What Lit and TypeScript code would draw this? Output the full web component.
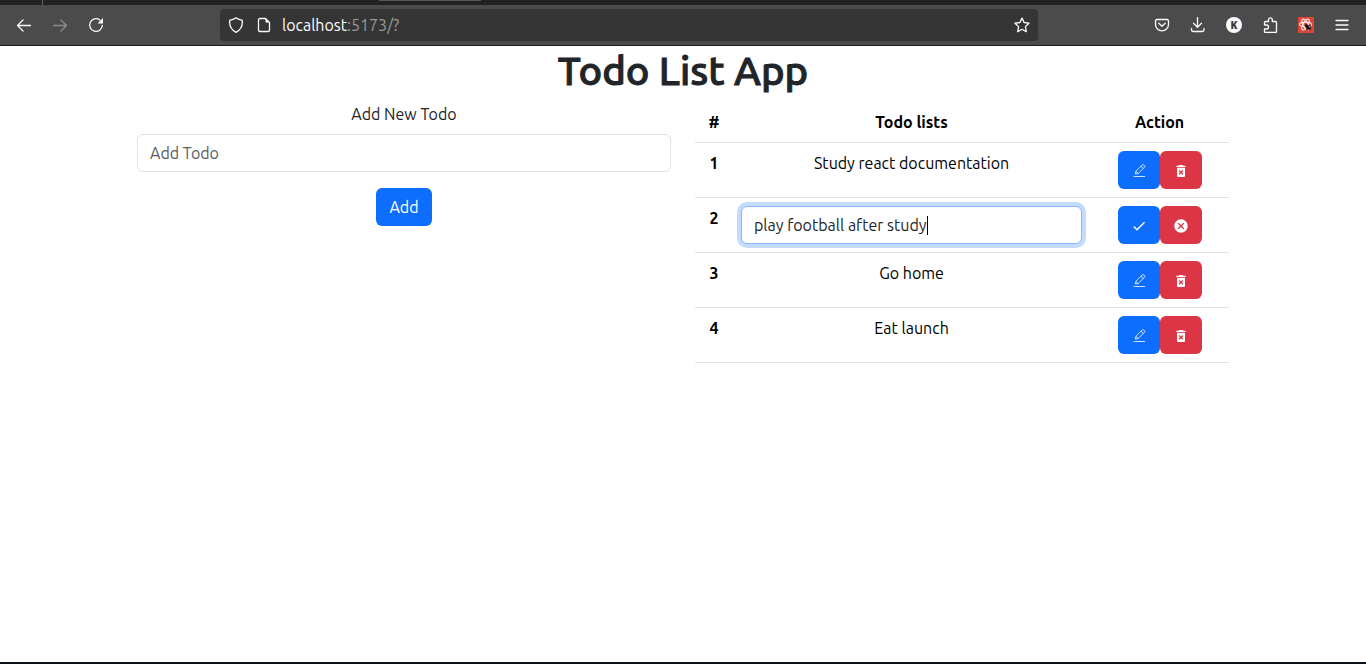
import { LitElement, html, svg, css } from "lit";
import { customElement, property, state, query } from "lit/decorators.js";

const line = (body: unknown) => html`<svg class="line" viewBox="0 0 16 16" width="16" height="16" aria-hidden="true">${body}</svg>`;
const solid = (d: string) => html`<svg class="solid" viewBox="0 0 24 24" width="16" height="16" aria-hidden="true"><path d=${d}></path></svg>`;

const icons = {
  back: line(svg`<path d="M14.500 8.500H1.500M7 3L1.500 8.500L7 14"/>`),
  forward: line(svg`<path d="M1.500 8.500H14.500M9 3L14.500 8.500L9 14"/>`),
  reload: line(svg`<path d="M14.300 8.500A6.300 6.300 0 1 1 11.800 3"/><path class="fill" d="M15 1V6.500H9.500Z"/>`),
  shield: line(svg`<path d="M8 0.800C9.800 2.200 12 2.900 14.200 3.100C14.900 8.300 12.600 13 8 15.300C3.400 13 1.100 8.300 1.800 3.100C4 2.900 6.200 2.200 8 0.800Z"/>`),
  page: line(svg`<path d="M3.800 1.500H9.500L13.500 5.500V13.200A1.300 1.300 0 0 1 12.200 14.500H3.800A1.300 1.300 0 0 1 2.500 13.200V2.800A1.300 1.300 0 0 1 3.800 1.500Z"/><path class="fill" d="M9.500 1.500V5.500H13.500Z"/>`),
  star: line(svg`<path d="M8 1.100L10.100 5.500L15 6.200L11.400 9.600L12.300 14.700L8 12.300L3.700 14.700L4.600 9.600L1 6.200L5.900 5.500Z"/>`),
  pocket: line(svg`<path d="M2.800 2.500H13.200A1.700 1.700 0 0 1 14.500 4.200V7.500A6.500 6.300 0 0 1 1.500 7.500V4.200A1.700 1.700 0 0 1 2.800 2.500Z"/><path d="M4.800 6.300L8 9.300L11.200 6.300"/>`),
  download: line(svg`<path d="M7.500 0.500V10M3.500 6.300L7.500 10.200L11.500 6.300M1.500 11.500V12.800A1.700 1.700 0 0 0 3.200 14.500H12.300A1.700 1.700 0 0 0 14 12.800V11.500"/>`),
  puzzle: line(svg`<path d="M2.500 8V5.500A1 1 0 0 1 3.500 4.500H6.500V2.800A1.900 1.900 0 0 1 10.300 2.800V4.500H13.500A1 1 0 0 1 14.500 5.500V14.500A1 1 0 0 1 13.500 15.500H3.500A1 1 0 0 1 2.500 14.500V12H4.500A2 2 0 0 0 4.500 8Z"/>`),
  menu: line(svg`<path d="M2 3.500H14M2 8H14M2 12.500H14"/>`),
  extension: html`<svg viewBox="0 0 16 16" width="16" height="16" aria-hidden="true">${svg`
    <rect width="16" height="16" fill="#dd4634"/>
    <g fill="none" stroke="#f6e4e1" stroke-width="1.100">
      <ellipse cx="7.500" cy="7.500" rx="6" ry="2.400"/>
      <ellipse cx="7.500" cy="7.500" rx="6" ry="2.400" transform="rotate(60 7.500 7.500)"/>
      <ellipse cx="7.500" cy="7.500" rx="6" ry="2.400" transform="rotate(120 7.500 7.500)"/>
    </g>
    <ellipse cx="9.500" cy="10" rx="1.500" ry="3.300" transform="rotate(-40 9.500 10)" fill="#1d1210"/>
    <path d="M7 10L13 8M8 12.500L13.500 11M9 7V13.500M12 8.500V13.500" stroke="#1d1210" stroke-width="0.800" fill="none"/>`}</svg>`,
  edit: html`<svg class="thin" viewBox="0 0 16 16" width="16" height="16" aria-hidden="true">${svg`
    <path d="M4.300 11L4.900 8.300L11.300 1.900A1 1 0 0 1 12.700 1.900L13.600 2.800A1 1 0 0 1 13.600 4.200L7.200 10.500ZM10 3.300L12.300 5.500M4.900 8.300L7.200 10.500"/>
    <path d="M2.500 13.500H14"/>`}</svg>`,
  remove: solid("M6 19c0 1.100.9 2 2 2h8c1.100 0 2-.9 2-2V7H6v12zm2.460-7.120 1.410-1.410L12 12.590l2.120-2.120 1.410 1.410L13.410 14l2.120 2.120-1.410 1.410L12 15.410l-2.120 2.120-1.410-1.410L10.590 14l-2.130-2.120zM15.500 4l-1-1h-5l-1 1H5v2h14V4z"),
  check: solid("M9 16.170 4.830 12l-1.420 1.410L9 19 21 7l-1.410-1.410z"),
  cancel: solid("M12 2C6.470 2 2 6.470 2 12s4.470 10 10 10 10-4.470 10-10S17.530 2 12 2zm5 13.590L15.590 17 12 13.410 8.410 17 7 15.590 10.590 12 7 8.410 8.410 7 12 10.590 15.590 7 17 8.410 13.410 12 17 15.590z"),
};

@customElement("browser-bar")
class BrowserBar extends LitElement {
  @property() host = "";
  @property() path = "";

  static styles = css`
    :host { display: block; font-family: "Ubuntu", "Noto Sans", sans-serif; }
    .tabs { display: flex; height: 5px; background: #222; }
    .divider { width: 1px; margin-left: 42px; background: #666; }
    .tab { width: 102px; height: 1px; margin-left: 336px; background: #555; }
    .bar {
      display: grid;
      grid-template-columns: 220px 1fr 328px;
      align-items: center;
      height: 40px;
      background: #4b4b4b;
      border-bottom: 1px solid #1c1c1c;
    }
    .group { display: flex; padding: 0 6px; }
    .end { justify-content: flex-end; }
    button {
      display: grid; place-items: center;
      width: 36px; height: 32px; padding: 0;
      border: 0; background: none; color: #fbfbfe;
    }
    button:disabled { color: #8c8c8c; }
    .url {
      display: flex; align-items: center;
      height: 32px; border-radius: 4px;
      background: #353535; color: #fbfbfe;
    }
    .url button { width: 24px; }
    .url .first, .url .mark { width: 32px; }
    .url .mark { margin-left: auto; }
    .address { padding-left: 6px; font-size: 16px; line-height: 20px; color: #fbfbfe; }
    .path { color: #9b9b9b; }
    .line { fill: none; stroke: currentColor; stroke-width: 1.3; stroke-linejoin: round; stroke-linecap: round; }
    .line .fill { fill: currentColor; stroke: none; }
    .account {
      display: grid; place-items: center;
      width: 16px; height: 16px; border-radius: 50%;
      background: #fbfbfe; color: #3c3c3c;
      font: 800 10px/16px "Open Sans", "Noto Sans", sans-serif;
    }
  `;

  render() {
    return html`
      <div class="tabs"><span class="divider"></span><span class="tab"></span></div>
      <div class="bar">
        <nav class="group">
          <button aria-label="Back">${icons.back}</button>
          <button aria-label="Forward" disabled>${icons.forward}</button>
          <button aria-label="Reload">${icons.reload}</button>
        </nav>
        <div class="url">
          <button class="first" aria-label="Tracking protection">${icons.shield}</button>
          <button aria-label="Site information">${icons.page}</button>
          <span class="address">${this.host}<span class="path">${this.path}</span></span>
          <button class="mark" aria-label="Bookmark">${icons.star}</button>
        </div>
        <div class="group end">
          <button aria-label="Pocket">${icons.pocket}</button>
          <button aria-label="Downloads">${icons.download}</button>
          <button aria-label="Account"><span class="account">K</span></button>
          <button aria-label="Extensions">${icons.puzzle}</button>
          <button aria-label="Developer tools">${icons.extension}</button>
          <button aria-label="Menu">${icons.menu}</button>
        </div>
      </div>
    `;
  }
}

@customElement("app-root")
class AppRoot extends LitElement {
  @state() private todos = ["Study react documentation", "play football after study", "Go home", "Eat launch"];
  @state() private editing = 1;
  @state() private caretX = 0;
  @query(".editor") private editor!: HTMLInputElement;

  static styles = css`
    * { box-sizing: border-box; }
    :host {
      display: flex; flex-direction: column;
      min-height: 100vh; box-sizing: border-box;
      border-bottom: 2px solid #0c1218;
      background: #fff; color: #212529;
      font: 400 16px/24px "Ubuntu", "Noto Sans", sans-serif;
    }
    .container { width: 100%; max-width: 1140px; margin: 0 auto; padding: 0 24px; text-align: center; }
    h1 { margin: 0 0 6px; font-size: 40px; font-weight: 500; line-height: 50px; -webkit-text-stroke: 1px currentColor; }
    .row { display: grid; grid-template-columns: 1fr 1fr; gap: 24px; align-items: start; }
    label { display: block; margin-bottom: 8px; }
    input {
      display: block; width: 100%; height: 38px; padding: 6px 12px;
      border: 1px solid #dee2e6; border-radius: 6px; outline: 0;
      background: #fff; color: #212529; font: inherit;
    }
    input::placeholder { color: #595c5f; opacity: 1; }
    .add { margin-top: 16px; }
    button {
      height: 38px; padding: 6px 12px;
      border: 1px solid transparent; border-radius: 6px;
      color: #fff; font: inherit;
    }
    .primary { background: #0d6efd; }
    .danger { background: #dc3545; }
    table { width: 100%; table-layout: fixed; border-collapse: collapse; color: #000; }
    th, td { padding: 8px; border-bottom: 1px solid #dee2e6; vertical-align: top; }
    th { font-weight: 700; }
    .number { width: 38px; }
    .action { width: 26%; }
    .field { position: relative; }
    .editor { border-color: #86b7fe; box-shadow: 0 0 0 4px rgba(13, 110, 253, 0.25); caret-color: transparent; }
    .caret { position: absolute; top: 10px; width: 1px; height: 19px; background: #000; }
    .buttons { display: flex; justify-content: center; }
    .buttons button { display: flex; padding-top: 11px; }
    .solid { fill: currentColor; }
    .thin { fill: none; stroke: currentColor; stroke-width: 0.8; }
  `;

  firstUpdated() {
    this.placeCaret();
  }

  /* The caret sits right after the edited text. */
  private placeCaret() {
    const style = getComputedStyle(this.editor);
    const context = document.createElement("canvas").getContext("2d")!;
    context.font = `${style.fontSize} ${style.fontFamily}`;
    this.caretX = 14 + Math.round(context.measureText(this.editor.value).width);
  }

  private renderEditor(todo: string) {
    return html`<div class="field">
      <input class="editor" type="text" aria-label="Edit todo" .value=${todo} @input=${this.placeCaret} />
      <span class="caret" style="left: ${this.caretX}px"></span>
    </div>`;
  }

  render() {
    return html`
      <browser-bar host="localhost" path=":5173/?"></browser-bar>
      <main class="container">
        <h1>Todo List App</h1>
        <div class="row">
          <form @submit=${(e: Event) => e.preventDefault()}>
            <label for="todo">Add New Todo</label>
            <input id="todo" type="text" placeholder="Add Todo" />
            <button class="add primary" type="submit">Add</button>
          </form>
          <table>
            <thead>
              <tr><th class="number" scope="col">#</th><th scope="col">Todo lists</th><th class="action" scope="col">Action</th></tr>
            </thead>
            <tbody>
              ${this.todos.map((todo, i) => {
                const active = i === this.editing;
                return html`<tr>
                  <th scope="row">${i + 1}</th>
                  <td>${active ? this.renderEditor(todo) : todo}</td>
                  <td>
                    <div class="buttons">
                      <button class="primary" aria-label=${active ? "Save" : "Edit"}>${active ? icons.check : icons.edit}</button>
                      <button class="danger" aria-label=${active ? "Cancel" : "Delete"}>${active ? icons.cancel : icons.remove}</button>
                    </div>
                  </td>
                </tr>`;
              })}
            </tbody>
          </table>
        </div>
      </main>
    `;
  }
}
